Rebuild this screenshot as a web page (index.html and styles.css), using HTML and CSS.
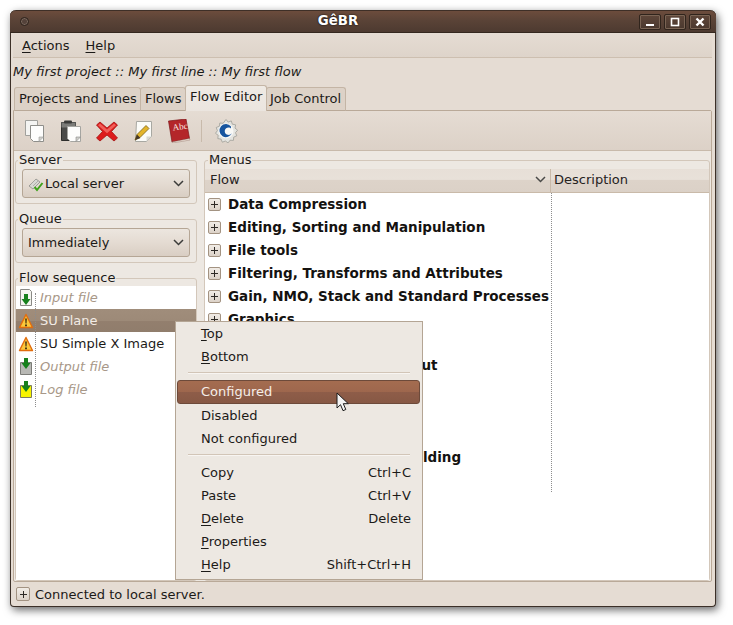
FILE: index.html
```html
<!DOCTYPE html>
<html lang="en">
<head>
<meta charset="utf-8">
<title>GêBR</title>
<link rel="stylesheet" href="styles.css">
</head>
<body>
<div class="window">
  <header class="titlebar">
    <span class="wm-dot"></span>
    <span class="wm-title">GêBR</span>
    <div class="wm-buttons">
      <span class="wm-btn"><svg width="10" height="10" viewBox="0 0 10 10"><rect x="1" y="7" width="8" height="2" fill="#fff"/></svg></span>
      <span class="wm-btn"><svg width="10" height="10" viewBox="0 0 10 10"><rect x="1.5" y="1.5" width="7" height="7" fill="none" stroke="#fff" stroke-width="1.6"/></svg></span>
      <span class="wm-btn"><svg width="10" height="10" viewBox="0 0 10 10"><path d="M1.5 1.5l7 7M8.5 1.5l-7 7" stroke="#fff" stroke-width="2.4" fill="none"/></svg></span>
    </div>
  </header>

  <nav class="menubar">
    <span class="menubar-item"><u>A</u>ctions</span>
    <span class="menubar-item"><u>H</u>elp</span>
  </nav>

  <div class="info">My first project :: My first line :: My first flow</div>

  <div class="tabs">
    <span class="tab tab-1">Projects and Lines</span>
    <span class="tab tab-2">Flows</span>
    <span class="tab tab-active">Flow Editor</span>
    <span class="tab tab-4">Job Control</span>
  </div>

  <main class="page">
    <div class="toolbar">
      <svg class="tool" width="24" height="24" viewBox="0 0 24 24"><path d="M2.500 1.500h12v15h-12z" fill="#f4f4f2" stroke="#a0a09c"/><path d="M7.500 6.500h13v16h-10l-3-3z" fill="#fdfdfc" stroke="#8e8e8a"/><path d="M16 22.500l4.500-4.500h-4.500z" fill="#d0d0cc" stroke="#9c9c98" stroke-width=".6"/></svg>
      <svg class="tool" width="24" height="24" viewBox="0 0 24 24"><path d="M2.500 3.500h14v18h-14z" fill="#4a4a48" stroke="#2e2e2c"/><path d="M2.500 3.500h14v5h-14z" fill="#7b7b78"/><rect x="5" y="1.500" width="8" height="3" rx="1" fill="#3a3a38"/><path d="M8.500 7.500h13v15h-10l-3-3z" fill="#fdfdfc" stroke="#a5a5a1"/><path d="M17 22.500l4.500-4.500h-4.500z" fill="#cfcfcb" stroke="#8a8a86" stroke-width=".6"/></svg>
      <svg class="tool" width="24" height="24" viewBox="0 0 24 24"><path d="M5 3l7 6 7-6 3.500 3-6 6.500 6 6.500-3.500 3-7-6-7 6-3.500-3 6-6.500-6-6.500z" fill="#dd1c1c" stroke="#a31212" stroke-width=".8"/><path d="M5 4.500l7 6 7-6 2 1.700-9 8-9-8z" fill="#f0605a"/></svg>
      <svg class="tool" width="24" height="24" viewBox="0 0 24 24"><path d="M5.500 2.500h15v15l-5 5h-11z" fill="#fbfbf8" stroke="#a8a8a2"/><path d="M15.500 22.500v-5h5z" fill="#d8d8d2"/><path d="M4 21l2-5.500 9-9 3 3-9 9z" fill="#e3b42a" stroke="#7a6115" stroke-width=".8"/><path d="M4 21l2-5.500 3.500 3.500z" fill="#47392a"/></svg>
      <svg class="tool" width="24" height="24" viewBox="0 0 24 24"><path d="M1.500 2l17.500-2 3.500 19.500-17.500 3.500z" fill="#b4262a" stroke="#7c1518" stroke-width=".7"/><path d="M5 23l17.500-3.500.5 1.500-17.500 3z" fill="#efe4da" stroke="#8a6a60" stroke-width=".4"/><text class="abc" x="6" y="11.500" transform="rotate(-7 6 11.500)">Abc</text></svg>
      <span class="tool-sep"></span>
      <svg class="tool" width="24" height="24" viewBox="0 0 24 24"><path d="M12 .5l2.200 2.600 3.100-1.200 1 3.300 3.300.6-.6 3.300 2.600 2.100-2.100 2.500 1.300 3.100-3.100 1.300-.3 3.300-3.300-.2-2 2.700-2.700-1.900-3.100 1.200-1.200-3.100-3.300-.5.400-3.300-2.700-2 1.900-2.700-1.200-3.100 3.100-1.200.5-3.300 3.300.3z" fill="#e4e4e0" stroke="#96968f" stroke-width=".7"/><circle cx="12" cy="12" r="7.500" fill="#f8f8f6"/><path d="M17 7.500a6.500 6.500 0 1 0 1 6.500c-1 1.500-2.700 2.200-4.400 1.800-2-.5-3.200-2.300-2.800-4.300.4-2 2.300-3.300 4.300-3 .7.100 1.300.4 1.900 1z" fill="#17559f"/></svg>
    </div>

    <div class="panes">
      <section class="left">
        <fieldset class="frame frame-server">
          <legend>Server</legend>
          <div class="combo">
            <svg class="combo-icon" width="16" height="16" viewBox="0 0 16 16"><path d="M1 10l7-7 4 3-7 7z" fill="#d8d8d4" stroke="#8c8c88" stroke-width=".8"/><path d="M3 8l5-5M5 10l5-5" stroke="#a4a4a0" stroke-width=".8"/><path d="M6.500 11l2.500 3 5.500-7" fill="none" stroke="#3fa21b" stroke-width="2"/></svg>
            <span class="combo-text">Local server</span>
            <svg class="chev" width="11" height="7" viewBox="0 0 11 7"><path d="M1 1l4.500 4.500L10 1" fill="none" stroke="#3c3c3a" stroke-width="1.500"/></svg>
          </div>
        </fieldset>
        <fieldset class="frame frame-queue">
          <legend>Queue</legend>
          <div class="combo">
            <span class="combo-text">Immediately</span>
            <svg class="chev" width="11" height="7" viewBox="0 0 11 7"><path d="M1 1l4.500 4.500L10 1" fill="none" stroke="#3c3c3a" stroke-width="1.500"/></svg>
          </div>
        </fieldset>
        <fieldset class="frame frame-flow">
          <legend>Flow sequence</legend>
          <div class="flow-list">
            <div class="flow-row muted">
              <svg class="row-icon" width="16" height="20" viewBox="0 0 16 20"><path d="M2.500 1.500h9l2 2v14h-11z" fill="#f4f4f0" stroke="#8a8a86"/><path d="M6 6h4v5h2.500l-4.500 6-4.500-6h2.500z" fill="#16801c"/></svg>
              <span class="row-text">Input file</span>
            </div>
            <div class="flow-row selected">
              <svg class="row-icon" width="16" height="16" viewBox="0 0 16 16"><path d="M8 1.500l6.500 13h-13z" fill="#fbc83a" stroke="#e26d0e" stroke-width="1.400" stroke-linejoin="round"/><path d="M7.200 5.500h1.600l-.3 5h-1zM7.100 11.500h1.800v1.800h-1.800z" fill="#3a2a10"/></svg>
              <span class="row-text">SU Plane</span>
            </div>
            <div class="flow-row">
              <svg class="row-icon" width="16" height="16" viewBox="0 0 16 16"><path d="M8 1.500l6.500 13h-13z" fill="#fbc83a" stroke="#e26d0e" stroke-width="1.400" stroke-linejoin="round"/><path d="M7.200 5.500h1.600l-.3 5h-1zM7.100 11.500h1.800v1.800h-1.800z" fill="#3a2a10"/></svg>
              <span class="row-text">SU Simple X Image</span>
            </div>
            <div class="flow-row muted">
              <svg class="row-icon" width="16" height="20" viewBox="0 0 16 20"><path d="M2.500 5.500h11v12h-11z" fill="#b8b8b4" stroke="#7c7c78"/><path d="M6 1h4v5h2.500l-4.500 6-4.500-6h2.500z" fill="#16801c"/></svg>
              <span class="row-text">Output file</span>
            </div>
            <div class="flow-row muted">
              <svg class="row-icon" width="16" height="20" viewBox="0 0 16 20"><path d="M2.500 5.500h11v12h-11z" fill="#f8f400" stroke="#7c7c60"/><path d="M6 1h4v5h2.500l-4.500 6-4.500-6h2.500z" fill="#16801c"/></svg>
              <span class="row-text">Log file</span>
            </div>
          </div>
          <span class="flow-dots"></span>
        </fieldset>
      </section>

      <fieldset class="frame frame-menus">
        <legend>Menus</legend>
        <div class="tree-head">
          <div class="col-flow">Flow<svg class="chev" width="11" height="7" viewBox="0 0 11 7"><path d="M1 1l4.500 4.500L10 1" fill="none" stroke="#4a4a48" stroke-width="1.500"/></svg></div>
          <div class="col-desc">Description</div>
        </div>
        <div class="tree">
          <div class="tree-row"><span class="exp"></span>Data Compression</div>
          <div class="tree-row"><span class="exp"></span>Editing, Sorting and Manipulation</div>
          <div class="tree-row"><span class="exp"></span>File tools</div>
          <div class="tree-row"><span class="exp"></span>Filtering, Transforms and Attributes</div>
          <div class="tree-row"><span class="exp"></span>Gain, NMO, Stack and Standard Processes</div>
          <div class="tree-row"><span class="exp"></span>Graphics</div>
          <div class="tree-row"><span class="exp"></span>Import/Export</div>
          <div class="tree-row"><span class="exp"></span>Seismic Unix Input / Output</div>
          <div class="tree-row"><span class="exp"></span>Migration</div>
          <div class="tree-row"><span class="exp"></span>Noise</div>
          <div class="tree-row"><span class="exp"></span>Seismic Unix</div>
          <div class="tree-row"><span class="exp"></span>Simulation and Model Building</div>
          <div class="tree-row"><span class="exp"></span>Utilities</div>
          <span class="tree-dots"></span>
        </div>
      </fieldset>
    </div>
  </main>

  <footer class="status"><span class="exp exp-status"></span>Connected to local server.</footer>

  <div class="popup">
    <div class="pop-item"><span><u>T</u>op</span></div>
    <div class="pop-item"><span><u>B</u>ottom</span></div>
    <div class="pop-sep"></div>
    <div class="pop-item pop-hot"><span>Configured</span></div>
    <div class="pop-item"><span>Disabled</span></div>
    <div class="pop-item"><span>Not configured</span></div>
    <div class="pop-sep"></div>
    <div class="pop-item"><span>Copy</span><span>Ctrl+C</span></div>
    <div class="pop-item"><span>Paste</span><span>Ctrl+V</span></div>
    <div class="pop-item"><span><u>D</u>elete</span><span>Delete</span></div>
    <div class="pop-item"><span><u>P</u>roperties</span></div>
    <div class="pop-item"><span><u>H</u>elp</span><span>Shift+Ctrl+H</span></div>
  </div>

  <svg class="cursor" width="14" height="21" viewBox="0 0 14 21"><path d="M1 1v15l3.500-3.300 2.500 6 2.800-1.200-2.500-5.800h5z" fill="#f4f4f4" stroke="#1c1c1c" stroke-width="1"/></svg>
</div>
</body>
</html>
```

FILE: styles.css
```css
* { box-sizing: border-box; }

html, body {
  margin: 0;
  padding: 0;
  background: #fff;
}

body {
  width: 733px;
  height: 625px;
  overflow: hidden;
  padding: 10px 0 0 10px;
  font-family: "DejaVu Sans", sans-serif;
  font-size: 13px;
  color: #1c1a18;
}

u { text-underline-offset: 2px; }

.window {
  position: relative;
  width: 706px;
  height: 597px;
  display: flex;
  flex-direction: column;
  padding: 0 3px 0 2px;
  background: #e5dcd3;
  border: 1px solid #3c3028;
  border-top: 0;
  border-radius: 6px 6px 4px 4px;
  box-shadow: 2px 3px 8px rgba(0, 0, 0, .6);
}

/* title bar */
.titlebar {
  flex: none;
  height: 23px;
  margin: 0 -4px 0 -3px;
  padding: 0 5px 0 10px;
  display: flex;
  align-items: center;
  border-radius: 6px 6px 0 0;
  background: linear-gradient(#6c4c3c, #5a4337 45%, #4d3a30);
  border-top: 1px solid #3e2f27;
  border-bottom: 1px solid #34281f;
}

.wm-dot {
  width: 9px;
  height: 9px;
  border-radius: 50%;
  border: 1px solid #2e231c;
  background: #54423a;
  box-shadow: 0 0 0 1px #7c6a5f inset;
}

.wm-title {
  flex: 1;
  text-align: center;
  padding: 0 0 2px 8px;
  color: #fff;
  font-weight: bold;
  font-size: 13.33px;
  text-shadow: 0 0 2px #000;
}

.wm-buttons { display: flex; gap: 3px; }

.wm-btn {
  width: 22px;
  height: 16px;
  display: flex;
  align-items: center;
  justify-content: center;
  border: 1px solid #30241c;
  border-radius: 2px;
  box-shadow: 0 0 0 1px #7a6454 inset;
  background: linear-gradient(#5e4639, #4a382e);
}

/* menu bar */
.menubar {
  flex: none;
  height: 25px;
  display: flex;
  align-items: center;
  gap: 16px;
  padding: 0 8px 0 9px;
  border-bottom: 1px solid #cdbfb0;
  background: linear-gradient(#e5dcd3, #ded4ca);
}

.info {
  flex: none;
  height: 27px;
  line-height: 27px;
  font-style: italic;
  white-space: nowrap;
}

/* tabs */
.tabs {
  flex: none;
  height: 26px;
  display: flex;
  align-items: flex-end;
  position: relative;
  z-index: 1;
  margin-bottom: -1px;
  white-space: nowrap;
}

.tab {
  height: 24px;
  line-height: 21px;
  padding: 0 4px;
  background: #ddd2c7;
  border: 1px solid #c4b5a5;
  border-bottom: 1px solid #b9a998;
  border-radius: 3px 3px 0 0;
}

.tab-1 { margin-left: 1px; width: 127px; }
.tab-2 { width: 46px; margin-left: -1px; }
.tab-4 { width: 80px; margin-left: -1px; padding-left: 3px; }

.tab-active {
  width: 82px;
  height: 26px;
  line-height: 21px;
  margin-left: -1px;
  z-index: 1;
  background: linear-gradient(#efeae4, #ebe5df);
  border-bottom: 0;
}

/* notebook page */
.page {
  flex: none;
  height: 472px;
  width: 699px;
  display: flex;
  flex-direction: column;
  background: #ede8e2;
  border: 1px solid #b9a998;
  border-radius: 0 2px 2px 2px;
}

.toolbar {
  flex: none;
  height: 40px;
  display: flex;
  align-items: center;
  padding: 0 0 0 9px;
  gap: 12px;
  background: linear-gradient(#e5dcd3, #dcd1c7);
  border-bottom: 1px solid #c8baab;
}

.tool { flex: none; }

.tool-sep {
  width: 1px;
  height: 22px;
  background: #c8baab;
  margin-left: -2px;
}

.abc {
  font-family: "Liberation Serif", serif;
  font-size: 9px;
  fill: #f8e8e2;
}

.panes {
  flex: 1;
  min-height: 0;
  display: flex;
  padding: 0 0 0 1px;
  gap: 7px;
}

.left {
  flex: none;
  width: 182px;
  display: flex;
  flex-direction: column;
  padding-top: 1px;
}

/* frames */
.frame {
  margin: 0;
  padding: 0;
  min-width: 0;
  border: 1px solid #d3c7ba;
  border-radius: 3px;
}

.frame legend {
  margin-left: 2px;
  padding: 0 1px;
  line-height: 16px;
  height: 16px;
}

.frame-server, .frame-queue {
  height: 52px;
  padding: 1px 6px 0 6px;
}

.frame-server legend, .frame-queue legend { margin-left: -4px; }
.frame-menus legend { margin-left: 3px; }

.frame-queue { margin-top: 7px; }

.combo {
  height: 29px;
  display: flex;
  align-items: center;
  padding: 0 5px 0 5px;
  border: 1px solid #b5a695;
  border-radius: 3px;
  background: linear-gradient(#ece6df 0%, #e4dbd2 50%, #d9cec3 100%);
}

.combo-icon { flex: none; margin-right: 1px; }
.combo-text { flex: 1; }
.chev { flex: none; }

.frame-flow {
  position: relative;
  margin-top: 7px;
  flex: 1;
  min-height: 0;
}

.flow-list {
  display: flex;
  flex-direction: column;
  height: 294px;
  background: #fff;
}

.flow-row {
  height: 23px;
  flex: none;
  display: flex;
  align-items: center;
  padding-left: 2px;
  white-space: nowrap;
}

.row-icon {
  flex: none;
  width: 16px;
  margin-right: 6px;
}

.muted .row-text {
  color: #a89888;
  font-style: italic;
}

.selected {
  color: #f2ece6;
  background: linear-gradient(#a08d7b 0%, #9d8a78 50%, #937f6e 50%, #907d6c 100%);
}

.flow-dots {
  position: absolute;
  left: 19px;
  top: 7px;
  height: 114px;
  border-left: 1px dotted #8d8d8d;
}

/* right pane */
.frame-menus {
  flex: 1;
  min-width: 0;
  margin: 1px 1px 0 0;
  display: flex;
  flex-direction: column;
}

.tree-head {
  height: 24px;
  margin-top: 1px;
  display: flex;
  color: #26221e;
  border-bottom: 1px solid #c9baa9;
  background: linear-gradient(#e7dfd7 0%, #e8e1d9 45%, #ddd3c9 50%, #dbd1c7 100%);
}

.col-flow {
  width: 346px;
  display: flex;
  align-items: center;
  justify-content: space-between;
  padding: 0 4px 2px 5px;
  border-right: 1px solid #c9baa9;
}

.col-desc {
  flex: 1;
  padding-left: 3px;
  line-height: 21px;
}

.tree {
  position: relative;
  height: 387px;
  background: #fff;
}

.tree-row {
  height: 23px;
  display: flex;
  align-items: center;
  padding: 0 0 2px 3px;
  font-size: 13.5px;
  font-weight: bold;
  color: #141210;
  white-space: nowrap;
}

.tree-row .exp { margin: 2px 7px 0 0; }

.tree-dots {
  position: absolute;
  left: 346px;
  top: 0;
  height: 299px;
  border-left: 1px dotted #8d8d8d;
}

.exp {
  flex: none;
  width: 13px;
  height: 13px;
  border: 1px solid #a39382;
  border-radius: 2px;
  background:
    linear-gradient(#2e2a26, #2e2a26) center / 7px 1px no-repeat,
    linear-gradient(#2e2a26, #2e2a26) center / 1px 7px no-repeat,
    linear-gradient(#f1ece6, #dcd2c8);
}

/* status bar */
.status {
  flex: 1;
  display: flex;
  align-items: center;
  padding-left: 3px;
  gap: 5px;
}

.exp-status { width: 14px; height: 14px; }

/* context menu */
.popup {
  position: absolute;
  left: 164px;
  top: 311px;
  width: 248px;
  height: 259px;
  padding: 0 1px 1px 1px;
  background: #ede8e2;
  border: 1px solid #b4a594;
  z-index: 5;
}

.pop-item {
  height: 23px;
  display: flex;
  align-items: center;
  justify-content: space-between;
  padding: 0 10px 0 24px;
  color: #1c1a18;
}

.pop-sep {
  height: 2px;
  margin: 4px 11px 5px 11px;
  background: linear-gradient(#d2c5b7 50%, #f8f5f2 50%);
}

.pop-sep:nth-child(3) { margin-bottom: 6px; }

.pop-hot {
  height: 24px;
  margin: 0 1px 0 0;
  padding: 0 9px 2px 23px;
  color: #f5efe9;
  border: 1px solid #6d4a3a;
  border-radius: 3px;
  background: linear-gradient(#a46c50 0%, #9e674d 50%, #8e5d49 50%, #875844 100%);
}

.cursor {
  position: absolute;
  left: 325px;
  top: 382px;
  z-index: 6;
}
```
